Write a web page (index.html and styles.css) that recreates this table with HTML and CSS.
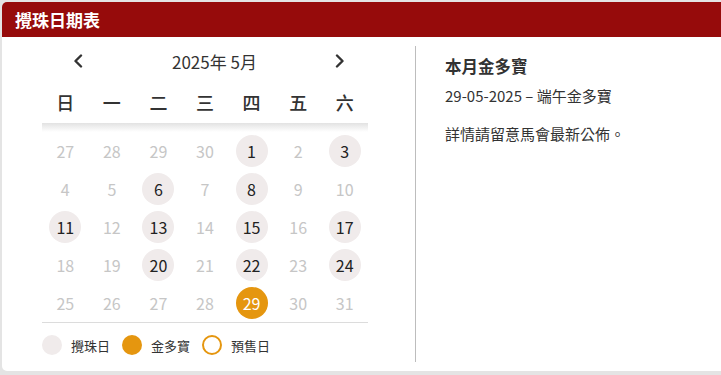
FILE: index.html
```html
<!DOCTYPE html>
<html lang="zh-Hant">
<head>
<meta charset="utf-8">
<title>攪珠日期表</title>
<link rel="stylesheet" href="styles.css">
</head>
<body>
<div class="card">
  <div class="card-head">攪珠日期表</div>
  <div class="card-body">
    <div class="calendar">
      <div class="nav">
        <svg class="chev" viewBox="0 0 10 14" width="10" height="14"><path d="M8 1.5 L2.5 7 L8 12.5" fill="none" stroke="#333" stroke-width="2.4" stroke-linecap="round" stroke-linejoin="round"/></svg>
        <div class="month">2025年 5月</div>
        <svg class="chev" viewBox="0 0 10 14" width="10" height="14"><path d="M2 1.5 L7.5 7 L2 12.5" fill="none" stroke="#333" stroke-width="2.4" stroke-linecap="round" stroke-linejoin="round"/></svg>
      </div>
      <div class="weekdays">
        <span>日</span><span>一</span><span>二</span><span>三</span><span>四</span><span>五</span><span>六</span>
      </div>
      <div class="shade"></div>
      <div class="days">
        <span class="d">27</span><span class="d">28</span><span class="d">29</span><span class="d">30</span><span class="d draw">1</span><span class="d">2</span><span class="d draw">3</span>
        <span class="d">4</span><span class="d">5</span><span class="d draw">6</span><span class="d">7</span><span class="d draw">8</span><span class="d">9</span><span class="d">10</span>
        <span class="d draw">11</span><span class="d">12</span><span class="d draw">13</span><span class="d">14</span><span class="d draw">15</span><span class="d">16</span><span class="d draw">17</span>
        <span class="d">18</span><span class="d">19</span><span class="d draw">20</span><span class="d">21</span><span class="d draw">22</span><span class="d">23</span><span class="d draw">24</span>
        <span class="d">25</span><span class="d">26</span><span class="d">27</span><span class="d">28</span><span class="d jackpot">29</span><span class="d">30</span><span class="d">31</span>
      </div>
      <div class="legend">
        <span class="dot dot-draw"></span><span class="lbl">攪珠日</span>
        <span class="dot dot-jackpot"></span><span class="lbl">金多寶</span>
        <span class="dot dot-presale"></span><span class="lbl">預售日</span>
      </div>
    </div>
    <div class="divider"></div>
    <div class="info">
      <div class="info-title">本月金多寶</div>
      <div class="info-line">29-05-2025 – 端午金多寶</div>
      <div class="info-note">詳情請留意馬會最新公佈。</div>
    </div>
  </div>
</div>
</body>
</html>
```

FILE: styles.css
```css
html, body {
  margin: 0;
  padding: 0;
}
body {
  background: #e4e4e4;
  padding: 2px 0 5px 2px;
  font-family: "Noto Sans CJK TC", "Noto Sans", sans-serif;
  color: #333;
}
.card {
  background: #fff;
  border-radius: 5px 0 0 5px;
  overflow: hidden;
}
.card-head {
  background: #960b0b;
  color: #fff;
  height: 35px;
  line-height: 35px;
  padding-left: 13px;
  font-size: 17px;
  font-weight: 700;
}
.card-body {
  display: flex;
  padding: 9px 0 9px 40px;
}
.calendar {
  width: 326px;
  flex: none;
}
.nav {
  display: flex;
  align-items: center;
  height: 30px;
  padding: 0 23px 0 31px;
}
.chev {
  display: block;
  flex: none;
}
.month {
  flex: 1;
  text-align: center;
  font-size: 17px;
  color: #333;
  padding-left: 11px;
}
.weekdays {
  display: grid;
  grid-template-columns: repeat(7, 1fr);
  margin-top: 5px;
  height: 42px;
  align-items: center;
  text-align: center;
  font-size: 18px;
  font-weight: 500;
  color: #333;
}
.shade {
  height: 9px;
  background: linear-gradient(to bottom, #e2e2e2, rgba(255,255,255,0));
}
.days {
  display: grid;
  grid-template-columns: repeat(7, 1fr);
  grid-auto-rows: 38px;
  border-bottom: 1px solid #dcdcdc;
}
.d {
  display: flex;
  align-items: center;
  justify-content: center;
  font-size: 16px;
  color: #c6c6c6;
}
.draw, .jackpot {
  width: 32px;
  height: 32px;
  border-radius: 50%;
  justify-self: center;
  align-self: center;
}
.draw {
  background: #f0ebeb;
  color: #222;
}
.jackpot {
  background: #e5960f;
  color: #fff;
}
.legend {
  display: flex;
  align-items: center;
  height: 34px;
  padding-top: 5px;
  font-size: 13px;
  color: #333;
}
.dot {
  width: 20px;
  height: 20px;
  border-radius: 50%;
  box-sizing: border-box;
  margin-right: 9px;
  flex: none;
}
.dot-draw { background: #f0ebeb; }
.dot-jackpot { background: #e5960f; }
.dot-presale { border: 2px solid #e5960f; }
.lbl { margin-right: 12px; }
.divider {
  width: 1px;
  background: #bdbdbd;
  margin-left: 47px;
  flex: none;
}
.info {
  padding-left: 29px;
  padding-top: 8px;
  color: #333;
}
.info-title {
  font-size: 16.5px;
  font-weight: 700;
  line-height: 24px;
}
.info-line {
  font-size: 15px;
  line-height: 22px;
  margin-top: 7px;
}
.info-note {
  font-size: 15px;
  line-height: 22px;
  margin-top: 16px;
}
```
